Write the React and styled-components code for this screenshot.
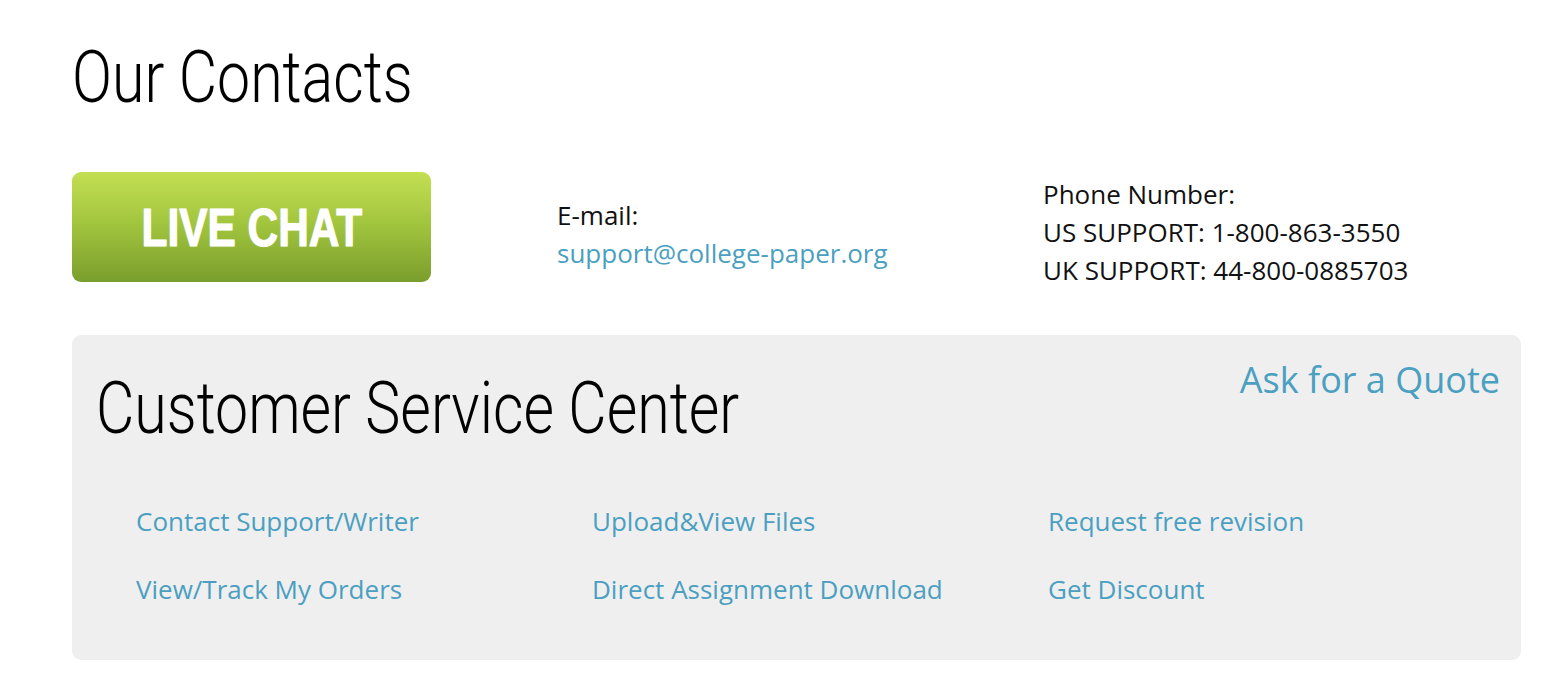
import styled, { createGlobalStyle } from "styled-components";

const GlobalStyle = createGlobalStyle`
  body {
    margin: 0;
    background: #ffffff;
    font-family: "Open Sans", "Liberation Sans", sans-serif;
    color: #111111;
  }
`;

const links = [
  "Contact Support/Writer",
  "Upload&View Files",
  "Request free revision",
  "View/Track My Orders",
  "Direct Assignment Download",
  "Get Discount",
];

const App = () => {
  return (
    <Page>
      <GlobalStyle />
      <Title>Our Contacts</Title>
      <ContactRow>
        <LiveChat href="#">
          <LiveChatText>LIVE CHAT</LiveChatText>
        </LiveChat>
        <InfoBlock $offset={24}>
          <InfoLine>E-mail:</InfoLine>
          <InfoLink href="#">support@college-paper.org</InfoLink>
        </InfoBlock>
        <InfoBlock $offset={3}>
          <InfoLine>Phone Number:</InfoLine>
          <InfoLine>US SUPPORT: 1-800-863-3550</InfoLine>
          <InfoLine>UK SUPPORT: 44-800-0885703</InfoLine>
        </InfoBlock>
      </ContactRow>
      <Panel>
        <PanelHead>
          <PanelTitle>Customer Service Center</PanelTitle>
          <QuoteLink href="#">Ask for a Quote</QuoteLink>
        </PanelHead>
        <LinkGrid>
          {links.map((l) => (
            <ServiceLink key={l} href="#">
              {l}
            </ServiceLink>
          ))}
        </LinkGrid>
      </Panel>
    </Page>
  );
};

const Page = styled.div`
  width: 1449px;
  padding: 0 0 0 72px;
`;

const Heading = styled.h1`
  display: inline-block;
  margin: 0;
  font-family: "Roboto", "Liberation Sans", sans-serif;
  font-weight: 300;
  font-size: 72px;
  line-height: 1;
  color: #000000;
  transform: scaleX(0.82);
  transform-origin: left center;
  white-space: nowrap;
`;

const Title = styled(Heading)`
  display: block;
  margin-top: 42px;
`;

const ContactRow = styled.div`
  display: grid;
  grid-template-columns: 485px 486px 1fr;
  align-items: start;
  margin-top: 58px;
`;

const LiveChat = styled.a`
  display: flex;
  align-items: center;
  justify-content: center;
  width: 359px;
  height: 110px;
  border-radius: 9px;
  background: linear-gradient(to bottom, #c3df52 0%, #a3c63f 45%, #7a9e2c 100%);
  text-decoration: none;
`;

const LiveChatText = styled.span`
  display: inline-block;
  font-family: "Liberation Sans Narrow", "Liberation Sans", sans-serif;
  font-weight: 700;
  font-size: 53px;
  color: #ffffff;
  text-shadow: 0 0 2px rgba(255, 255, 255, 0.5);
  transform: scaleX(0.8);
  -webkit-text-stroke: 1px #ffffff;
`;

const InfoBlock = styled.div`
  display: flex;
  flex-direction: column;
  margin-top: ${(p) => p.$offset}px;
  font-size: 26px;
  line-height: 38px;
`;

const InfoLine = styled.div`
  color: #111111;
`;

const InfoLink = styled.a`
  color: #4b9fc0;
  text-decoration: none;
`;

const Panel = styled.div`
  margin-top: 46px;
  background: #efeff0;
  border-radius: 9px;
  height: 325px;
  box-sizing: border-box;
  padding: 22px 21px 0 24px;
`;

const PanelHead = styled.div`
  display: flex;
  justify-content: space-between;
  align-items: flex-start;
`;

const PanelTitle = styled(Heading)`
  margin-top: 16px;
`;

const QuoteLink = styled.a`
  font-size: 36px;
  line-height: 46px;
  color: #4b9fc0;
  text-decoration: none;
`;

const LinkGrid = styled.div`
  display: grid;
  grid-template-columns: repeat(3, 456px);
  row-gap: 34px;
  padding-left: 40px;
  margin-top: 59px;
`;

const ServiceLink = styled.a`
  font-size: 26px;
  line-height: 34px;
  color: #4b9fc0;
  text-decoration: none;
`;

export default App;
